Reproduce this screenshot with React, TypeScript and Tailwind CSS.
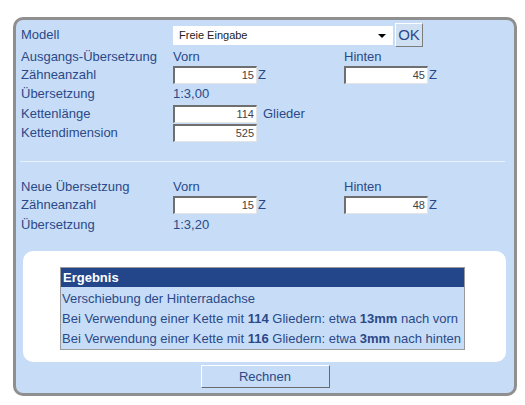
import React from "react";

const txt = "text-[#2b4988]";
const inputCls =
  "w-[84px] h-[18px] bg-white border-t-2 border-l-2 border-b border-r border-t-[#6f6f6f] border-l-[#6f6f6f] border-b-[#e4e4e4] border-r-[#e4e4e4] text-right pr-[2px] text-[11px] leading-[15px] text-[#444]";

function NumField({ value, unit }: { value: string; unit?: string }) {
  return (
    <div className="flex items-center">
      <div className={inputCls}>{value}</div>
      {unit && <span className="ml-[1px]">{unit}</span>}
    </div>
  );
}

function Row({ h, label, mid, right }: { h: string; label: string; mid?: React.ReactNode; right?: React.ReactNode }) {
  return (
    <div className={`grid grid-cols-[152px_171px_1fr] items-center ${h}`}>
      <span>{label}</span>
      <div>{mid}</div>
      <div>{right}</div>
    </div>
  );
}

export default function App() {
  return (
    <div className={`w-[525px] h-[405px] bg-white pt-[17px] pl-[13px] font-['Liberation_Sans',Arial,sans-serif] text-[13px] ${txt}`}>
      <div className="w-[504px] h-[379px] rounded-[10px] border-[3px] border-[#8f8f8f] bg-[#c7ddf7] pt-[3px] pl-[5px] pr-[4px]">
        {/* Ausgangs-Übersetzung */}
        <div className="grid grid-cols-[152px_1fr] items-center h-[24px]">
          <span>Modell</span>
          <div className="flex items-center">
            <div className="relative w-[220px] h-[19px] bg-white text-[11px] leading-[19px] text-[#222] pl-[6px]">
              Freie Eingabe
              <span className="absolute right-[7px] top-[8px] w-0 h-0 border-l-[4px] border-r-[4px] border-t-[4px] border-l-transparent border-r-transparent border-t-black" />
            </div>
            <div className="ml-[2px] w-[28px] h-[24px] bg-[#cfe0f3] border border-t-white border-l-white border-r-[#7d7d7d] border-b-[#7d7d7d] text-[15px] leading-[22px] text-center text-[#2b4988]">
              OK
            </div>
          </div>
        </div>
        <Row h="h-[18px]" label="Ausgangs-Übersetzung" mid="Vorn" right="Hinten" />
        <Row h="h-[19px]" label="Zähneanzahl" mid={<NumField value="15" unit="Z" />} right={<NumField value="45" unit="Z" />} />
        <Row h="h-[20px]" label="Übersetzung" mid="1:3,00" />
        <div className="grid grid-cols-[152px_1fr] items-center h-[19px]">
          <span>Kettenlänge</span>
          <div className="flex items-center">
            <div className={inputCls}>114</div>
            <span className="ml-[6px]">Glieder</span>
          </div>
        </div>
        <Row h="h-[20px]" label="Kettendimension" mid={<NumField value="525" />} />

        <div className="mt-[18px] mr-[5px] -ml-[1px] h-px bg-[#e9f2fc]" />

        {/* Neue Übersetzung */}
        <div className="mt-[15px]">
          <Row h="h-[18px]" label="Neue Übersetzung" mid="Vorn" right="Hinten" />
          <Row h="h-[20px]" label="Zähneanzahl" mid={<NumField value="15" unit="Z" />} right={<NumField value="48" unit="Z" />} />
          <Row h="h-[18px]" label="Übersetzung" mid="1:3,20" />
        </div>

        {/* Ergebnis */}
        <div className="mt-[18px] ml-[2px] w-[483px] h-[111px] rounded-[10px] bg-white pt-[16px] pl-[37px]">
          <div className="w-[405px] border border-[#9a9a9a] bg-[#c7ddf7]">
            <div className="h-[19px] bg-[#23468a] text-white font-bold leading-[19px] pl-[2px]">Ergebnis</div>
            <div className="pt-[2px] pl-[1px]">
              <div className="h-[20px] leading-[20px]">Verschiebung der Hinterradachse</div>
              <div className="h-[20px] leading-[20px]">
                Bei Verwendung einer Kette mit <b>114</b> Gliedern: etwa <b>13mm</b> nach vorn
              </div>
              <div className="h-[20px] leading-[20px]">
                Bei Verwendung einer Kette mit <b>116</b> Gliedern: etwa <b>3mm</b> nach hinten
              </div>
            </div>
          </div>
        </div>

        <div className="flex justify-center mt-[3px] pr-[1px]">
          <div className="w-[129px] h-[23px] bg-[#c7ddf7] border border-t-white border-l-white border-r-[#6a6a6a] border-b-[#6a6a6a] text-center leading-[21px]">
            Rechnen
          </div>
        </div>
      </div>
    </div>
  );
}
